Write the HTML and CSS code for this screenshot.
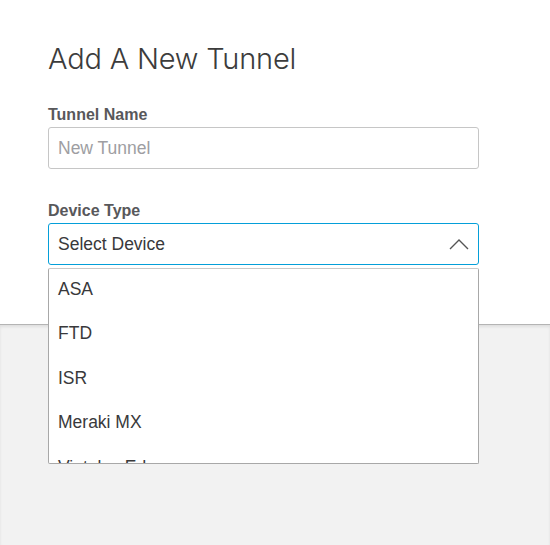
FILE: index.html
```html
<!DOCTYPE html>
<html>
<head>
<meta charset="utf-8">
<link rel="stylesheet" href="styles.css">
</head>
<body>
<div class="page">
  <div class="panel">
    <h1 class="title">Add A New Tunnel</h1>
    <div class="field field-name">
      <label class="label">Tunnel Name</label>
      <div class="input placeholder">New Tunnel</div>
    </div>
    <div class="field field-select">
      <label class="label">Device Type</label>
      <div class="select">
        <span>Select Device</span>
        <svg class="chev" width="20" height="11" viewBox="0 0 20 11"><path d="M1 10 L10 1 L19 10" fill="none" stroke="#555" stroke-width="1.4"/></svg>
      </div>
      <ul class="menu">
        <li>ASA</li>
        <li>FTD</li>
        <li>ISR</li>
        <li>Meraki MX</li>
        <li>Viptela vEdge</li>
      </ul>
    </div>
  </div>
  <div class="below"></div>
</div>
</body>
</html>
```

FILE: styles.css
```css
html, body {
  margin: 0;
  padding: 0;
  background: #f2f2f2;
  font-family: "Liberation Sans", Arial, sans-serif;
  color: #39393b;
}
.page {
  display: flex;
  flex-direction: column;
  height: 545px;
}
.panel {
  background: #ffffff;
  height: 324px;
  flex: none;
  box-sizing: border-box;
  padding: 40px 71px 0 48px;
}
.below {
  flex: 1;
  background: #f2f2f2;
  border-top: 1px solid #b4b4b4;
  box-shadow: inset 0 2px 3px rgba(0,0,0,0.08);
}
.title {
  margin: 0;
  font-family: Inter, "Liberation Sans", sans-serif;
  font-weight: 300;
  font-size: 29px;
  line-height: 38px;
  color: #3c3c3c;
  letter-spacing: -0.2px;
}
.field {
  display: flex;
  flex-direction: column;
}
.field-name { margin-top: 28px; }
.field-select { margin-top: 33px; position: relative; }
.label {
  font-weight: bold;
  font-size: 16px;
  line-height: 18px;
  color: #58585b;
  margin-bottom: 3px;
}
.input, .select {
  height: 42px;
  box-sizing: border-box;
  border: 1px solid #c6c6c6;
  border-radius: 3px;
  padding: 0 9px;
  display: flex;
  align-items: center;
  font-size: 17.5px;
}
.placeholder { color: #9e9ea2; }
.select {
  border-color: #049fd9;
  justify-content: space-between;
  color: #39393b;
}
.menu {
  position: absolute;
  left: 0;
  right: 0;
  top: 66px;
  height: 196px;
  box-sizing: border-box;
  margin: 0;
  padding: 0;
  list-style: none;
  background: #fff;
  border: 1px solid #a8a8a8;
  border-top-color: #c8c8c8;
  border-radius: 2px;
  overflow: hidden;
  z-index: 5;
}
.menu li {
  height: 44.5px;
  display: flex;
  align-items: center;
  padding: 0 9px;
  font-size: 17.5px;
  color: #39393b;
}
.menu li:first-child { margin-top: -2px; }
```
